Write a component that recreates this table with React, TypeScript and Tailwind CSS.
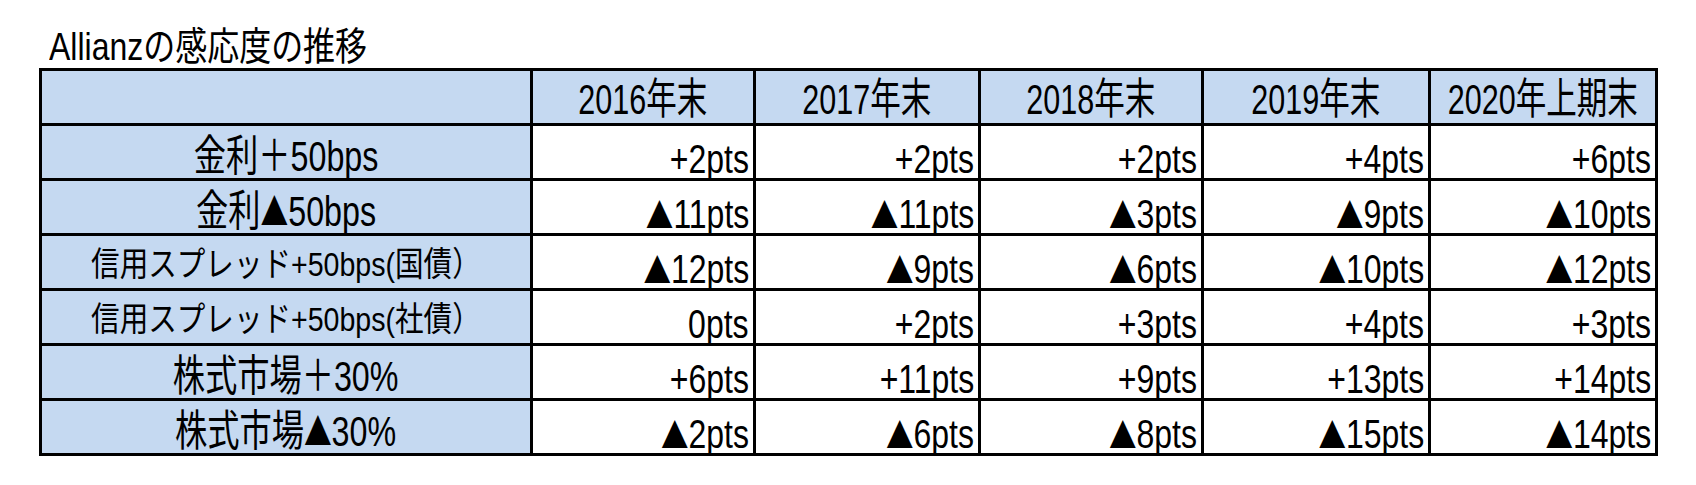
import * as React from 'react';

const headers = ['2016年末', '2017年末', '2018年末', '2019年末', '2020年上期末'];

// long labels were shrunk to fit in the sheet, so they carry a smaller size
const rows = [
  { label: '金利＋50bps', small: false, values: ['+2pts', '+2pts', '+2pts', '+4pts', '+6pts'] },
  { label: '金利▲50bps', small: false, values: ['▲11pts', '▲11pts', '▲3pts', '▲9pts', '▲10pts'] },
  { label: '信用スプレッド+50bps(国債）', small: true, values: ['▲12pts', '▲9pts', '▲6pts', '▲10pts', '▲12pts'] },
  { label: '信用スプレッド+50bps(社債）', small: true, values: ['0pts', '+2pts', '+3pts', '+4pts', '+3pts'] },
  { label: '株式市場＋30%', small: false, values: ['+6pts', '+11pts', '+9pts', '+13pts', '+14pts'] },
  { label: '株式市場▲30%', small: false, values: ['▲2pts', '▲6pts', '▲8pts', '▲15pts', '▲14pts'] },
];

const font = "font-['Liberation_Sans','Noto_Sans_CJK_JP',sans-serif]";

function Txt({ text }: { text: string }) {
  const parts = text.split('▲');
  return (
    <>
      {parts.map((p, i) => (
        <React.Fragment key={i}>
          {i > 0 && <span className="font-['Noto_Sans_CJK_JP',sans-serif] text-[0.86em]">▲</span>}
          {p}
        </React.Fragment>
      ))}
    </>
  );
}

export default function App() {
  return (
    <div className={`h-[485px] w-[1696px] overflow-hidden bg-white text-black ${font}`}>
      {/* title */}
      <div className="flex h-[68px] items-end pb-[2px] pl-[49px] text-[39px] leading-none">
        <span className="inline-block origin-left scale-x-[0.82] whitespace-nowrap">Allianzの感応度の推移</span>
      </div>

      {/* table */}
      <div className="ml-[39px] grid w-fit grid-cols-[488px_220px_222px_220px_224px_224px] gap-[3px] bg-black p-[3px]">
        <div className="h-[52px] bg-[#c5d9f1]" />
        {headers.map((h) => (
          <div key={h} className="flex h-[52px] items-end justify-center bg-[#c5d9f1] pb-[2px]">
            <span className="inline-block origin-center scale-x-[0.71] whitespace-nowrap text-[43px] leading-none">{h}</span>
          </div>
        ))}
        {rows.map((r) => (
          <React.Fragment key={r.label}>
            {r.small ? (
              <div className="flex h-[52px] items-end justify-center bg-[#c5d9f1] pb-[7px]">
                <span className="inline-block origin-center scale-x-[0.84] whitespace-nowrap text-[34px] leading-none">{r.label}</span>
              </div>
            ) : (
              <div className="flex h-[52px] items-end justify-center bg-[#c5d9f1]">
                <span className="inline-block origin-center scale-x-[0.75] whitespace-nowrap text-[43px] leading-none">
                  <Txt text={r.label} />
                </span>
              </div>
            )}
            {r.values.map((v, i) => (
              <div key={i} className="flex h-[52px] items-end justify-end bg-white pr-[4px]">
                <span className="-mb-[1px] inline-block origin-right scale-x-[0.8] whitespace-nowrap text-[40px] leading-none">
                  <Txt text={v} />
                </span>
              </div>
            ))}
          </React.Fragment>
        ))}
      </div>
    </div>
  );
}
